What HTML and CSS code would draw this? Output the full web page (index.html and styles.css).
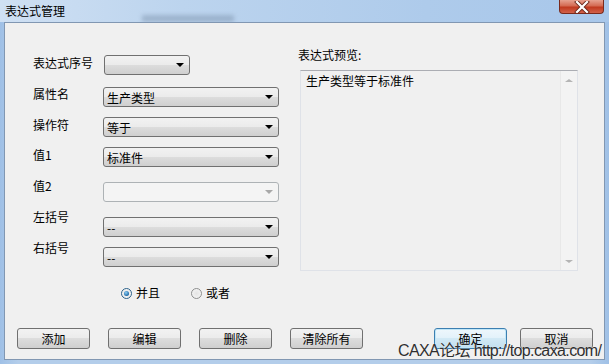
FILE: index.html
```html
<!DOCTYPE html>
<html>
<head>
    <title>表达式管理</title>
    <link rel="stylesheet" href="styles.css">
</head>
<body>
    <div class="window">
        <div class="titlebar">
            <span class="title">表达式管理</span>
            <span class="ghost"></span>
            <div class="close">
                <svg width="16" height="12" viewBox="0 0 16 12">
                    <path d="M3 1 L13 11 M13 1 L3 11" stroke="#6b2a1e" stroke-width="4" stroke-linecap="square"/>
                    <path d="M3 1 L13 11 M13 1 L3 11" stroke="#ffffff" stroke-width="2.2" stroke-linecap="square"/>
                </svg>
            </div>
        </div>

        <div class="client">
            <div class="main">
                <div class="labels">
                    <div class="label">表达式序号</div>
                    <div class="label">属性名</div>
                    <div class="label">操作符</div>
                    <div class="label">值1</div>
                    <div class="label">值2</div>
                    <div class="label">左括号</div>
                    <div class="label">右括号</div>
                </div>

                <div class="combos">
                    <div class="combo short"><span class="value"></span><span class="arrow"></span></div>
                    <div class="combo first"><span class="value">生产类型</span><span class="arrow"></span></div>
                    <div class="combo"><span class="value">等于</span><span class="arrow"></span></div>
                    <div class="combo"><span class="value">标准件</span><span class="arrow"></span></div>
                    <div class="combo disabled wide-gap"><span class="value"></span><span class="arrow"></span></div>
                    <div class="combo wide-gap"><span class="value">--</span><span class="arrow"></span></div>
                    <div class="combo"><span class="value">--</span><span class="arrow"></span></div>
                </div>

                <div class="preview">
                    <div class="preview-title">表达式预览:</div>
                    <div class="textbox">
                        <div class="text">生产类型等于标准件</div>
                        <div class="scrollbar">
                            <span class="scroll-up"></span>
                            <span class="scroll-down"></span>
                        </div>
                    </div>
                </div>
            </div>

            <div class="logic">
                <label class="radio"><span class="dot checked"></span>并且</label>
                <label class="radio"><span class="dot"></span>或者</label>
            </div>

            <div class="buttons">
                <div class="group">
                    <div class="btn">添加</div>
                    <div class="btn">编辑</div>
                    <div class="btn">删除</div>
                    <div class="btn">清除所有</div>
                </div>
                <div class="group right">
                    <div class="btn default">确定</div>
                    <div class="btn">取消</div>
                </div>
            </div>

            <div class="watermark">CAXA论坛 http://top.caxa.com/</div>
        </div>
    </div>
</body>
</html>
```

FILE: styles.css
```css
body {
    margin: 0;
    font-family: "Noto Sans CJK SC", "Liberation Sans", sans-serif;
    font-size: 12px;
    color: #000;
}

.window {
    width: 609px;
    height: 364px;
    background: linear-gradient(to right, #9fc0e6, #b3cdea 3%, #b3cdea 97%, #9fc0e6);
    overflow: hidden;
}

/* title bar */
.titlebar {
    height: 22px;
    display: flex;
    align-items: flex-start;
    background: linear-gradient(to right, #cfe0f3, #bcd4ee 30%, #aecbeb 70%, #a8c7ea);
    position: relative;
}

.title {
    padding: 4px 0 0 5px;
    line-height: 14px;
}

.ghost {
    position: absolute;
    left: 142px;
    top: 15px;
    width: 92px;
    height: 7px;
    background: #7d93ad;
    opacity: 0.5;
    filter: blur(2px);
}

.close {
    margin-left: auto;
    margin-right: 5px;
    width: 45px;
    height: 14px;
    box-sizing: border-box;
    border: 1px solid #7a2a1c;
    border-top: none;
    border-radius: 0 0 4px 4px;
    background: linear-gradient(#e6a190, #d46a52 45%, #c0391f 55%, #d2624a);
    display: flex;
    justify-content: center;
    align-items: center;
}

/* client area */
.client {
    margin: 0 4px;
    height: 338px;
    box-sizing: border-box;
    border: 1px solid #8197b2;
    background: #f0f0f0;
    position: relative;
}

.main {
    height: 248px;
    display: flex;
    padding: 26px 0 0 28px;
    box-sizing: border-box;
}

.labels {
    width: 70px;
    padding-top: 8px;
}

.label {
    line-height: 12px;
    height: 12px;
    margin-bottom: 18.8px;
    white-space: nowrap;
}

.combos {
    width: 176px;
    padding-top: 6px;
}

.combo {
    height: 20px;
    box-sizing: border-box;
    border: 1px solid #707070;
    border-radius: 3px;
    background: linear-gradient(#f2f2f2, #ebebeb 50%, #dddddd 50%, #cfcfcf);
    display: flex;
    align-items: center;
    margin-top: 10px;
}

.combo.short {
    width: 86px;
    margin-left: 1px;
    margin-top: 0;
}

.combo.first {
    margin-top: 12px;
}

.combo.wide-gap {
    margin-top: 15px;
}

.combo .value {
    flex: 1;
    padding: 2px 0 0 3px;
    line-height: 14px;
}

.combo .arrow {
    width: 0;
    height: 0;
    margin-right: 5px;
    border-left: 4px solid transparent;
    border-right: 4px solid transparent;
    border-top: 4px solid #000;
}

.combo.disabled {
    border-color: #adb2b5;
    background: #f4f4f4;
}

.combo.disabled .arrow {
    border-top-color: #a8a8a8;
}

/* preview */
.preview {
    margin-left: 19px;
}

.preview-title {
    line-height: 12px;
}

.textbox {
    margin: 9px 0 0 2px;
    width: 278px;
    height: 201px;
    box-sizing: border-box;
    border: 1px solid #dfe2e8;
    border-top-color: #abadb3;
    background: #f0f0f0;
    display: flex;
}

.textbox .text {
    flex: 1;
    padding: 3px 0 0 5px;
    line-height: 14px;
}

.scrollbar {
    width: 17px;
    background: #f3f3f3;
    border-left: 1px solid #e8e8e8;
    display: flex;
    flex-direction: column;
    justify-content: space-between;
    align-items: center;
    padding: 8px 0 7px;
    box-sizing: border-box;
}

.scroll-up {
    width: 0;
    height: 0;
    border-left: 4px solid transparent;
    border-right: 4px solid transparent;
    border-bottom: 3px solid #b4b4b4;
}

.scroll-down {
    width: 0;
    height: 0;
    border-left: 4px solid transparent;
    border-right: 4px solid transparent;
    border-top: 3px solid #b4b4b4;
}

/* and / or */
.logic {
    display: flex;
    gap: 31px;
    padding-left: 116px;
    margin-top: 14px;
    height: 16px;
    align-items: center;
}

.radio {
    display: flex;
    align-items: center;
    gap: 4px;
    line-height: 14px;
}

.dot {
    width: 11px;
    height: 11px;
    box-sizing: border-box;
    border-radius: 50%;
    border: 1px solid #8e8f8f;
    background: radial-gradient(circle, #e4e4e4, #f8f8f8);
    display: flex;
    justify-content: center;
    align-items: center;
}

.dot.checked {
    border-color: #2c628b;
}

.dot.checked::after {
    content: "";
    width: 5px;
    height: 5px;
    border-radius: 50%;
    background: radial-gradient(circle at 40% 35%, #8fd0f5, #1e6aa8 70%, #164f80);
}

/* buttons */
.buttons {
    display: flex;
    padding: 0 11px 0 12px;
    margin-top: 27px;
}

.group {
    display: flex;
    gap: 18px;
}

.group.right {
    margin-left: auto;
    gap: 13px;
}

.btn {
    width: 73px;
    height: 21px;
    box-sizing: border-box;
    border: 1px solid #707070;
    border-radius: 3px;
    background: linear-gradient(#f2f2f2, #ebebeb 50%, #dddddd 50%, #cfcfcf);
    text-align: center;
    line-height: 19px;
}

.btn.default {
    border-color: #3c7fb1;
    box-shadow: inset 0 0 0 1px #c0e6f8;
    background: linear-gradient(#eef7fc, #e2f1fa 50%, #d2e9f5 50%, #c3e0f0);
}

.watermark {
    position: absolute;
    left: 393px;
    top: 319px;
    font-family: "Liberation Sans", "Noto Sans CJK SC", sans-serif;
    font-size: 16px;
    line-height: 18px;
    color: #2f2f2f;
    letter-spacing: -0.6px;
    white-space: nowrap;
    text-shadow: 0 0 1px #fff;
}
```
